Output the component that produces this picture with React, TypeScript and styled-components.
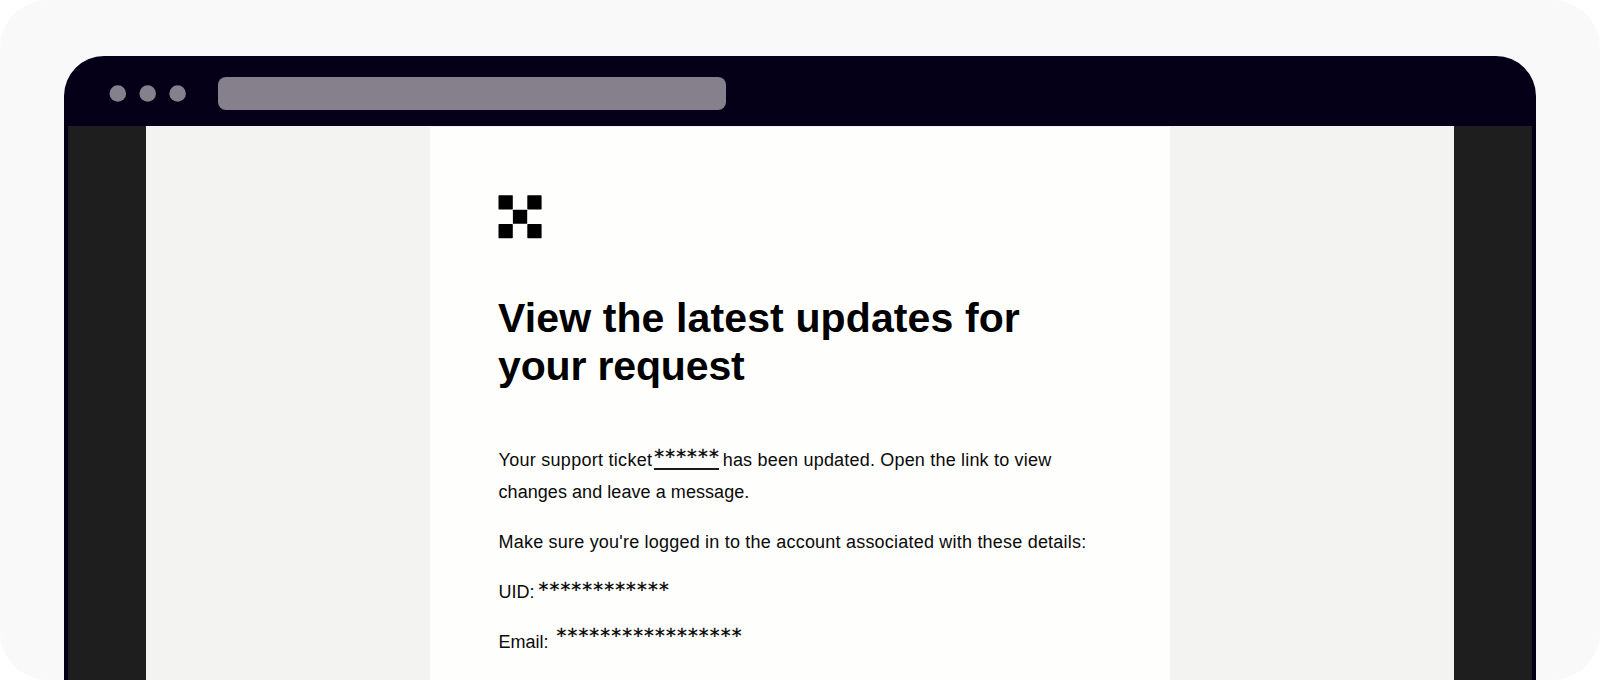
import styled, { createGlobalStyle } from "styled-components";

const logoCells = [
	[0, 0],
	[2, 0],
	[1, 1],
	[0, 2],
	[2, 2],
];

const App = () => (
	<>
		<GlobalStyle />
		<Canvas>
			<Browser>
				<Toolbar>
					<Dots viewBox="0 0 78 18">
						<circle cx="8.8" cy="8.5" r="8.3" />
						<circle cx="38.7" cy="8.5" r="8.3" />
						<circle cx="68.6" cy="8.5" r="8.3" />
					</Dots>
					<AddressBar />
				</Toolbar>
				<Viewport>
					<Page>
						<Mail>
							<Logo />
							<Title>
								<TitleLine $spacing={0.12}>View the latest updates for</TitleLine>
								<TitleLine $spacing={-0.15}>your request</TitleLine>
							</Title>
							<Intro>
								<Line $spacing={0.28}>
									Your support ticket
									<Ticket>
										<Mask>******</Mask>
									</Ticket>
									<LineEnd>has been updated. Open the link to view</LineEnd>
								</Line>
								<Line $spacing={0.06}>changes and leave a message.</Line>
							</Intro>
							<Paragraph $spacing={0.21}>
								Make sure you're logged in to the account associated with these
								details:
							</Paragraph>
							<Detail $gap={4} $lift={2}>
								UID: <Mask>************</Mask>
							</Detail>
							<Detail $gap={8} $lift={6}>
								Email: <Mask>*****************</Mask>
							</Detail>
						</Mail>
					</Page>
				</Viewport>
			</Browser>
		</Canvas>
	</>
);

const Logo = () => (
	<LogoSvg viewBox="0 0 44 44" aria-label="Logo">
		{logoCells.map(([col, row]) => (
			<rect
				key={`${col}-${row}`}
				x={0.5 + col * 14.4}
				y={0.3 + row * 14.4}
				width="14.3"
				height="14.1"
				rx="0.6"
			/>
		))}
	</LogoSvg>
);

const GlobalStyle = createGlobalStyle`
	* {
		box-sizing: border-box;
		margin: 0;
		padding: 0;
	}
	body {
		background: #ffffff;
		color: #000000;
		font-family: "Liberation Sans", Arial, sans-serif;
	}
`;

const Canvas = styled.main`
	width: 1600px;
	height: 680px;
	padding: 56px 64px 0;
	overflow: hidden;
	border-radius: 48px;
	background: #f9f9f9;
`;

const Browser = styled.section`
	height: 100%;
	display: flex;
	flex-direction: column;
	overflow: hidden;
	border-radius: 40px 40px 0 0;
	background: #050018;
`;

const Toolbar = styled.header`
	height: 70px;
	display: flex;
	align-items: center;
	gap: 31px;
	padding: 5px 45px 0;
`;

const Dots = styled.svg`
	width: 78px;
	height: 18px;
	fill: #85808b;
`;

const AddressBar = styled.div`
	width: 508px;
	height: 32.5px;
	border-radius: 8px;
	background: #85808b;
`;

const Viewport = styled.div`
	flex: 1;
	margin: 0 4px;
	padding: 0 78px;
	background: #1e1e1e;
`;

const Page = styled.div`
	height: 100%;
	padding: 1px 284px 0;
	background: #f3f3f2;
`;

const Mail = styled.article`
	height: 100%;
	padding: 68px 68px 0;
	border-top-left-radius: 2px;
	background: #fefefd;
`;

const LogoSvg = styled.svg`
	display: block;
	width: 44px;
	height: 44px;
`;

const Title = styled.h1`
	margin-top: 55px;
	font-size: 41px;
	font-weight: 700;
	line-height: 48px;
`;

const TitleLine = styled.span<{ $spacing: number }>`
	display: block;
	letter-spacing: ${({ $spacing }) => $spacing}px;
	white-space: nowrap;
`;

const Intro = styled.div`
	margin-top: 54px;
`;

const Line = styled.p<{ $spacing: number }>`
	height: 32px;
	padding-left: 0.5px;
	color: #0a0a0a;
	font-size: 18px;
	line-height: 32px;
	letter-spacing: ${({ $spacing }) => $spacing}px;
	white-space: nowrap;
`;

const LineEnd = styled.span`
	letter-spacing: 0.19px;
`;

const Paragraph = styled(Line)`
	margin-top: 18px;
`;

const Mask = styled.span`
	color: #000000;
	font-family: "DejaVu Sans", sans-serif;
	font-size: 19.6px;
	letter-spacing: 1.15px;
	-webkit-text-stroke: 0.3px #000000;
`;

const Ticket = styled.a`
	display: inline-block;
	height: 26px;
	margin: 0 3.4px 0 1.6px;
	padding-left: 0.4px;
	border-bottom: 2px solid #1a1a1a;
	line-height: 26px;
	vertical-align: top;

	${Mask} {
		margin-right: -0.6px;
	}
`;

const Detail = styled.p<{ $gap: number; $lift: number }>`
	height: 32px;
	display: flex;
	gap: ${({ $gap }) => $gap}px;
	margin-top: 18px;
	padding-left: 0.5px;
	color: #0a0a0a;
	font-size: 18px;
	line-height: 32px;

	${Mask} {
		margin-top: -${({ $lift }) => $lift}px;
	}
`;

export default App;
